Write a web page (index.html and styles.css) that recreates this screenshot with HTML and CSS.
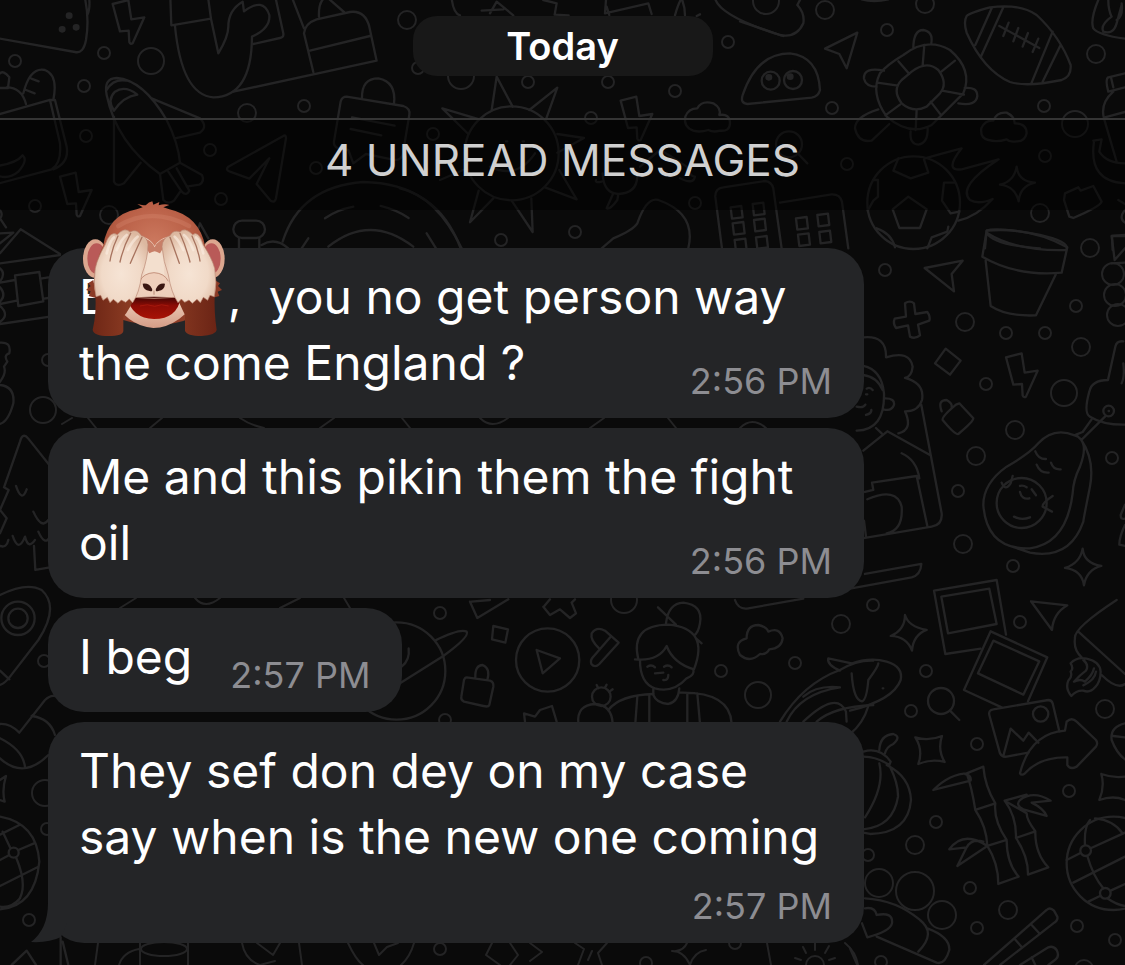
FILE: index.html
```
<!DOCTYPE html>
<html lang="en">
<head>
    <meta charset="UTF-8">
    <meta name="viewport" content="width=device-width, initial-scale=1">
    <title>Chat</title>
    <link rel="stylesheet" href="styles.css">
</head>
<body>
    <main class="chat">
        <!-- Doodle wallpaper -->
        <svg class="wallpaper" viewBox="0 0 1125 965" preserveAspectRatio="xMidYMin slice" aria-hidden="true">
            <defs>
                <path id="bolt" d="M0 12 L47 0 L56 58 L95 52 L60 130 Q53 134 50 126 L48 92 L22 94Z"/>
            </defs>

            <!-- Small bubbles -->
            <g class="doodle">
                <circle cx="15" cy="61" r="6"/><circle cx="104" cy="53" r="6"/><circle cx="84" cy="86" r="6"/>
                <circle cx="86" cy="136" r="6"/><circle cx="304" cy="106" r="6"/><circle cx="210" cy="150" r="6"/>
                <circle cx="316" cy="168" r="6"/><circle cx="221" cy="199" r="6"/><circle cx="35" cy="206" r="6"/>
                <circle cx="418" cy="68" r="6"/><circle cx="528" cy="82" r="6"/><circle cx="608" cy="82" r="6"/>
                <circle cx="675" cy="91" r="6"/><circle cx="591" cy="118" r="6"/><circle cx="433" cy="134" r="6"/>
                <circle cx="695" cy="203" r="6"/><circle cx="501" cy="240" r="6"/><circle cx="575" cy="232" r="6"/>
                <circle cx="728" cy="42" r="6"/><circle cx="887" cy="30" r="6"/><circle cx="832" cy="108" r="6"/>
                <circle cx="1044" cy="106" r="6"/><circle cx="847" cy="164" r="6"/><circle cx="1045" cy="156" r="6"/>
                <circle cx="885" cy="270" r="6"/><circle cx="1076" cy="306" r="6"/><circle cx="1006" cy="333" r="6"/>
                <circle cx="1045" cy="333" r="6"/><circle cx="986" cy="384" r="6"/><circle cx="1112" cy="458" r="6"/>
                <circle cx="958" cy="491" r="6"/><circle cx="1013" cy="566" r="6"/><circle cx="873" cy="605" r="6"/>
                <circle cx="1020" cy="622" r="6"/><circle cx="926" cy="671" r="6"/><circle cx="911" cy="711" r="6"/>
                <circle cx="977" cy="744" r="6"/><circle cx="1069" cy="791" r="6"/><circle cx="936" cy="822" r="6"/>
                <circle cx="868" cy="855" r="6"/><circle cx="970" cy="888" r="6"/><circle cx="977" cy="928" r="6"/>
                <circle cx="1077" cy="926" r="6"/><circle cx="1115" cy="940" r="6"/><circle cx="881" cy="962" r="6"/>
                <circle cx="440" cy="613" r="6"/><circle cx="721" cy="671" r="6"/><circle cx="795" cy="663" r="6"/>
                <circle cx="445" cy="720" r="6"/><circle cx="48" cy="360" r="6"/><circle cx="44" cy="661" r="6"/>
                <circle cx="47" cy="829" r="6"/><circle cx="29" cy="920" r="6"/><circle cx="440" cy="949" r="6"/>
                <circle cx="646" cy="963" r="6"/><circle cx="735" cy="943" r="6"/>
            </g>
            <!-- Medium and large bubbles -->
            <g class="doodle">
                <circle cx="247" cy="113" r="9"/><circle cx="109" cy="215" r="9"/><circle cx="407" cy="20" r="9"/>
                <circle cx="825" cy="10" r="9"/><circle cx="925" cy="4" r="9"/><circle cx="1096" cy="54" r="9"/>
                <circle cx="1040" cy="213" r="9"/><circle cx="1090" cy="248" r="9"/><circle cx="965" cy="322" r="9"/>
                <circle cx="1081" cy="347" r="9"/><circle cx="1015" cy="430" r="9"/><circle cx="976" cy="456" r="9"/>
                <circle cx="963" cy="544" r="9"/><circle cx="841" cy="624" r="9"/><circle cx="1105" cy="709" r="9"/>
                <circle cx="915" cy="845" r="9"/><circle cx="1008" cy="910" r="9"/><circle cx="1084" cy="969" r="9"/>
                <circle cx="151" cy="61" r="13"/><circle cx="461" cy="76" r="13"/><circle cx="766" cy="1" r="13"/>
                <circle cx="1075" cy="124" r="13"/><circle cx="1064" cy="393" r="13"/><circle cx="43" cy="410" r="13"/>
                <circle cx="758" cy="695" r="13"/><circle cx="624" cy="600" r="13"/><circle cx="45" cy="793" r="13"/>
                <circle cx="879" cy="883" r="14"/><circle cx="915" cy="891" r="19"/><circle cx="942" cy="915" r="14"/>
                <circle cx="1113" cy="274" r="11"/><circle cx="1115" cy="295" r="11"/><circle cx="1118" cy="315" r="11"/>
            </g>

            <!-- Top left: bag, plane, trousers, cake -->
            <g class="doodle zoomed" transform="scale(.3333)">
                <path class="dot" d="M207 47h1M186 88h1M228 82h1"/>
                <path d="M-10 114 L225 156 Q250 162 258 120 Q268 60 256 0M268 0 Q270 30 262 45"/>
                <use href="#bolt" x="338" y="0"/>
                <path d="M511 -10 L514 76 L633 56 L624 -10M633 56 L655 160 Q685 110 685 80 Q685 30 728 5 L732 34 Q790 -10 808 45 Q812 85 756 110 Q755 290 640 292 Q545 285 525 78"/>
                <path d="M826 -10 L850 100 Q852 112 840 114 L760 132M700 275 L1130 182 L1108 80 Q1095 30 1050 36 L950 58 Q915 70 912 100 L940 216M930 152 L1110 108M875 -10 L912 85M957 50 Q955 0 980 -10M985 -5 L1032 36"/>
                <path d="M-10 345 L150 300 L180 430 Q185 490 155 508 L-10 552M150 300 L165 300 L200 440 Q208 490 160 508M70 280 Q90 200 135 210 Q175 225 160 300M78 312 Q65 262 20 262M94 236 L116 244M78 270 L104 280M-10 264 L24 264 L28 232 Q10 210 0 220M-10 498 Q50 490 68 466 Q85 480 55 515 Q25 540 -10 526"/>
                <path d="M540 488 L480 522 Q350 430 320 285 Q310 235 350 234 Q430 240 500 360 Q535 430 540 488ZM320 270 Q340 235 380 242M342 332 Q320 300 345 275 Q375 255 412 284 Q370 290 342 332M455 295 L600 355 Q625 380 600 398 L525 415M342 350 L342 545 Q350 562 372 550 L422 488M480 522 L490 600 Q505 615 522 602 L540 576M540 488 L606 525 Q615 545 598 554 L560 560M505 515 L545 575 Q560 590 568 572 L530 505"/>
                <path d="M850 408 L685 500 Q675 510 690 515 L748 536 L808 475 L770 552 L812 602 Q825 610 828 595 L858 415 Q858 402 850 408Z"/>
                <use href="#bolt" x="180" y="518"/>
                <path d="M1040 290 L1210 318 Q1232 325 1228 345 L1208 465 Q1200 485 1175 478 L1098 462 L1060 490 L1045 450 L1015 445 Q1000 440 1002 425 L1022 305 Q1026 290 1040 290ZM1086 295 Q1085 235 1135 235 Q1190 245 1182 312M1056 352 L1184 377M1052 387 L1144 406"/>
                <path d="M848 725 Q900 560 1090 546 Q1310 550 1382 745M985 740 Q1110 640 1240 740M975 655 Q1010 630 1060 620M1142 618 Q1190 630 1226 654M905 745 L925 715"/>
                <rect x="700" y="662" width="95" height="52" rx="26"/>
                <path d="M717 714 V745M778 714 V745M785 735 Q825 710 865 745M590 700 L600 670 L625 715"/>
            </g>

            <!-- Top middle: sun, cloud, phones -->
            <g class="doodle zoomed" transform="translate(400 0) scale(.3333)">
                <circle cx="335" cy="460" r="141"/>
                <path d="M275 330 L290 230 L338 320M388 330 L472 263 L438 358M205 402 L127 325 L238 358M472 402 L552 414 L472 458M435 562 L530 598 L478 510M335 602 L398 696 L394 595M236 572 L210 667 L280 595M190 510 L120 540"/>
                <path d="M318 424h4M368 424h4M270 500 Q350 540 405 460"/>
                <path d="M155 -5 Q160 40 180 46M245 32 L310 28M270 40 L290 5 L340 46M430 0 L470 10 L464 44 L506 46M618 0 L615 40 L745 10 L755 42M825 46 Q835 10 845 -5 Q855 20 855 46M620 20 L628 45M890 48 L900 43M945 -5 Q960 50 1150 108"/>
                <use href="#bolt" x="662" y="290"/>
                <path d="M880 392 Q850 380 856 350 Q865 325 892 325 Q905 300 940 310 Q965 325 958 345 Q990 340 990 370 Q990 395 960 392 Q940 398 925 390 Q900 398 880 392Z"/>
                <path d="M608 520 Q610 580 655 582 Q710 580 712 530M640 580 L620 625 Q630 630 652 600 L655 582M720 500 L780 450 Q800 460 860 500 Q870 530 885 530 Q880 555 840 535M605 545 Q585 550 588 540"/>
                <path d="M605 745 L640 715 Q700 690 712 670 Q740 590 775 600 Q890 640 865 745M0 565 Q110 590 185 745M80 700 L108 745"/>
                <path d="M966 745 L946 590 Q945 565 970 562 L1095 543 Q1115 545 1120 565 L1145 745M1140 608 L1295 583 Q1320 582 1326 605 L1345 745"/>
                <path d="M992 622l32 -4 4 34 -32 4zM1058 612l32 -4 4 34 -32 4zM998 670l32 -4 4 34 -32 4zM1062 660l32 -4 4 34 -32 4zM1004 720l32 -4 4 34 -32 4zM1068 712l32 -4 4 34 -32 4zM1188 655l32 -4 4 34 -32 4zM1252 645l32 -4 4 34 -32 4zM1194 704l32 -4 4 34 -32 4zM1258 696l32 -4 4 34 -32 4z"/>
            </g>

            <!-- Top right: turtle, football, soccer ball -->
            <g class="doodle zoomed" transform="translate(740 0) scale(.3333)">
                <path d="M0 64 L120 105 Q170 115 190 70 Q195 40 172 15 L180 0M365 -2 Q400 8 445 -2"/>
                <path d="M22 312 Q0 310 8 285 Q50 160 150 160 Q235 170 240 270 Q235 290 215 293Z"/>
                <circle cx="92" cy="242" r="27"/><circle cx="159" cy="240" r="27"/>
                <path class="dot" d="M86 232h1M150 230h1"/>
                <path d="M352 98 L255 146 L298 162 L320 205 Z"/>
                <path d="M490 165 Q560 110 630 150 Q700 210 670 280 L575 375 Q510 410 440 350 Q390 280 420 220 Q440 195 490 165ZM515 215 Q560 180 595 210 Q625 250 600 280 L560 320 Q520 340 485 310 Q455 270 485 240ZM553 135 L548 196M645 182 L604 215M672 284 L606 272M602 344 L572 305M527 390 L530 330M436 346 L480 314M412 248 L474 257M475 184 L508 222M520 146 Q520 90 550 90 Q580 95 574 130M432 212 Q370 200 372 236 Q378 260 410 260M674 264 Q712 260 712 288 Q708 320 655 310M415 328 Q345 350 345 385 Q355 430 395 422 L448 372M512 394 Q508 432 535 434 Q565 430 563 382"/>
                <path d="M680 48 Q690 38 750 22 Q840 10 890 45 Q960 110 992 195 Q995 230 965 240 Q860 262 810 246 Q730 210 680 98 Q670 65 680 48ZM755 25 L706 135M790 22 L722 172M938 95 L875 248M962 135 L908 245M778 78 L898 144M806 68 L790 108M835 84 L820 124M864 99 L848 140M895 116 L878 156"/>
                <path d="M1075 0 Q1050 60 1060 85 Q1075 105 1155 116M1105 0 Q1105 30 1115 50 Q1080 75 1090 95 Q1120 105 1130 70 L1145 15M1130 60 Q1150 50 1145 10"/>
                <path d="M1155 220 L1105 232 Q1095 238 1105 275 L1155 262M1113 232 L1120 262M1120 275 Q1080 310 1092 355 L1130 485M1092 353 L1155 336M1060 422 L1085 418 L1078 455 Q1100 490 1155 490M1062 425 Q1045 545 1155 550"/>
                <path d="M745 420 Q720 415 724 385 Q735 360 760 362 Q770 335 800 338 Q825 350 824 370 Q860 370 860 400 Q855 425 830 424 Q810 428 800 418 Q770 428 745 420Z"/>
                <circle cx="147" cy="433" r="39"/><path d="M175 462 L202 490"/>
                <circle cx="521" cy="608" r="139"/>
                <path d="M505 590 L560 628 L540 684 L478 684 L458 628ZM475 475 L460 512 L512 535 L565 518 L552 478M383 632 L400 602 L414 590 L414 540 L400 540M642 548 L612 548 L606 602 L632 640 L658 635M410 685 Q455 700 465 742M562 745 L575 712 L622 695 L625 680"/>
                <path d="M555 475 Q600 462 665 445 Q610 515 665 508 L776 478 Q650 560 690 600 Q715 615 758 597 Q710 650 655 662"/>
                <path d="M830 500 Q835 545 885 548 Q840 558 836 604 Q825 558 780 554 Q822 545 830 500Z"/>
                <path d="M975 580 L1015 562 L1022 572 L1060 558 L1085 605 Q1080 620 1000 654 L988 650 L972 600Z"/>
                <path d="M735 745 L740 692 Q770 680 900 705 Q985 725 980 745M740 698 Q760 735 900 745M1118 750 L1116 708 H1155M1155 612 L1135 600M1155 668 Q1135 655 1155 630"/>
            </g>

            <!-- Right: flower pot, person, avocado -->
            <g class="doodle zoomed" transform="translate(850 200) scale(.3333)">
                <path d="M410 92 Q540 80 652 142 L635 218 Q500 230 397 170ZM410 98 Q500 155 650 150M407 182 L422 318 Q470 350 558 346 L618 222"/>
                <path d="M338 182 L224 204 L312 274 L305 222 Z"/>
                <path d="M165 310 Q180 300 192 310 L196 342 L232 336 Q242 350 238 362 L204 374 L210 406 Q195 418 180 410 L174 376 L138 384 Q128 370 134 356 L168 350Z"/>
                <path d="M287 446 L332 482 L300 524 L255 490ZM328 610 L370 655 Q370 665 325 702 Q315 705 278 660 Q275 650 318 614ZM275 634 Q262 600 290 600 Q308 610 305 622"/>
                <use href="#bolt" x="468" y="460"/>
                <path d="M40 412 Q110 405 108 472 Q180 450 188 500 Q185 530 165 534 Q225 550 216 600 Q205 635 165 634 Q190 690 145 700M40 498 Q95 510 102 580 Q105 690 20 692M40 525 Q80 530 98 570M106 595 Q135 595 132 615 Q125 635 100 628M20 620 Q40 625 46 614M48 645 Q65 640 64 630M50 566 Q60 560 68 570M48 583h4M78 684 L95 700M40 752 L112 694 L240 765M214 615 L275 940 Q278 975 245 980 L45 1014M155 760 Q200 780 208 835M45 876 L70 870 L66 848 L200 828 L232 978M52 898 Q140 860 155 920 Q160 990 110 1000M45 1122 L214 1092 Q212 1125 185 1132 L0 1166M42 962 L48 1010"/>
                <path d="M820 424 Q800 422 796 440 L774 540 Q725 540 718 575 Q700 640 720 650 Q760 675 825 674M815 550 Q825 530 820 490"/>
                <circle cx="776" cy="633" r="16"/>
                <path d="M776 633h1"/>
                <path d="M725 658 L698 696 L678 704 L694 720 L708 706 L765 650M674 706 Q610 680 565 730 Q540 760 470 800 Q400 850 400 915 Q410 1050 540 1045 Q650 1030 668 880 Q670 840 690 800 Q720 720 674 706M694 720 Q735 780 720 860 Q700 960 700 965 Q660 1080 540 1058 L475 1036"/>
                <circle cx="515" cy="909" r="75"/>
                <path d="M556 754 Q565 778 588 777M603 788 Q610 810 632 808M560 794 Q570 820 596 818M455 848 Q465 875 482 850 L488 828M510 876 Q515 900 538 895M510 858 Q520 855 530 862M545 868 L558 886M492 950 Q515 962 540 952M608 888 Q575 910 578 920 L606 935"/>
                <path d="M698 1046 Q702 1090 754 1098 Q710 1110 702 1156 Q695 1110 645 1104 Q690 1090 698 1046ZM165 1245 Q175 1280 230 1290 Q190 1305 186 1352 Q170 1310 122 1308 Q165 1290 165 1245Z"/>
                <path d="M543 1204 L652 1216 Q610 1240 606 1290Z"/>
                <path d="M825 105 L785 108 L794 180 L825 145M785 190 L825 188M825 914 L812 945 Q812 960 825 956M825 975 Q808 1010 808 1034 L825 1038"/>
            </g>

            <!-- Bottom right: photos, bamboo, basketball -->
            <g class="doodle zoomed" transform="translate(850 600) scale(.3333)">
                <path d="M468 104 L440 -60 L252 -28 L286 162 L392 146M274 -10 L294 100 L440 72 L418 -34 L274 -10"/>
                <path d="M422 94 L592 172 L534 304M422 94 L342 270 L455 322M430 122 L568 184 L520 284 L384 220Z"/>
                <path d="M418 345 Q415 330 430 328 L595 300 Q605 300 608 310 L628 394M418 345 L450 460 Q455 472 470 470 L535 458M460 468 L482 386 L520 422 L536 398 L565 428"/>
                <circle cx="572" cy="342" r="23"/>
                <path d="M510 520 Q540 400 645 392 L650 365 Q665 350 680 365 L738 420 Q745 430 738 440 L680 500 Q660 510 652 495 L652 472 Q570 470 525 520 Q515 528 510 520Z"/>
                <path d="M800 0 Q670 85 675 115 Q670 150 695 172M755 225 Q800 270 825 252M685 95 L825 222M662 190 Q680 170 710 176 Q750 185 752 215 Q752 245 735 262 Q720 280 700 272 Q680 270 664 288 Q645 265 655 242 Q668 230 662 215 Q672 205 662 190ZM700 180 Q718 195 708 212 Q690 225 672 245 Q690 235 705 245 Q728 225 732 205M738 215 Q735 240 700 256"/>
                <circle cx="273" cy="303" r="39"/><path d="M300 332 L328 360"/>
                <path d="M0 192 Q60 170 110 185 Q160 200 152 240 Q130 300 0 332M85 190 Q85 200 55 240 Q50 300 36 304 Q10 300 5 220M55 318 Q40 370 0 402M98 265h2"/>
                <path d="M196 412 Q235 425 276 408 Q262 450 284 486 Q245 475 205 492 Q220 450 196 412ZM754 522 Q790 535 825 530M754 522 Q765 560 748 600 Q790 585 825 600"/>
                <path d="M40 455 Q90 440 122 485 L118 495 Q80 470 40 470M88 450 Q90 405 130 402 Q155 410 130 432 Q110 440 105 460M110 495 Q180 530 183 600 Q175 700 60 702 L40 698M120 500 Q145 550 144 590 Q130 680 40 688M88 490 Q105 560 45 652"/>
                <path d="M400 500 L350 520 Q365 560 376 630 L436 610 Q405 560 400 500ZM376 630 Q410 680 412 738 L470 720 Q430 660 436 610M412 738 Q445 790 445 852 L506 830 Q470 790 470 720M355 520 Q300 520 250 570 L362 542 Q365 525 345 522M412 738 Q340 690 298 748 L350 742 L322 798 L412 738M350 742 Q365 715 400 725"/>
                <path d="M464 602 L530 584 M530 640 Q530 660 556 694 L498 714 Q500 650 464 602ZM498 714 Q535 770 534 824 L595 802 Q555 760 556 694M510 600 Q550 570 602 602 L545 608 Q580 625 590 648 L520 628 Q495 615 510 600Z"/>
                <circle cx="790" cy="790" r="140"/><circle cx="707" cy="752" r="16"/><circle cx="766" cy="880" r="16"/>
                <path d="M650 780 L690 760M722 745 L825 698M670 848 L825 770M715 905 L750 888M782 872 L825 852M705 735 Q702 680 720 660M712 768 Q730 830 760 865M735 655 Q790 660 818 700M772 895 Q800 915 825 918M825 370 Q780 380 785 420 Q800 460 825 478M790 408 L825 412"/>
                <path d="M45 925 Q75 920 80 945 Q130 935 126 970 Q120 995 52 1012 L36 970M45 895 Q140 900 210 960 Q260 1000 205 1055M80 1010 L260 1088 Q285 1095 298 1050 Q300 1010 232 985M0 1045 L22 1095"/>
                <path d="M402 1095 L590 930 Q600 920 612 932 L622 950 Q625 962 610 970 L450 1095M495 1018 L516 1042M545 975 L570 1002M510 1095 L595 1042 Q610 1036 620 1050 Q630 1070 615 1080 L595 1095M545 1072 L556 1095"/>
            </g>

            <!-- Middle strip: planet, play button, cook -->
            <g class="doodle zoomed" transform="translate(390 590) scale(.3333)">
                <circle cx="20" cy="243" r="146"/>
                <path d="M135 152 Q210 115 230 125 Q240 140 160 198 L30 280M56 175 Q60 210 35 230M310 108 L354 118 L346 158 L306 148ZM230 262 L300 272 Q312 276 310 290 L298 345 Q295 352 280 348 L222 335 Q212 330 214 320 L222 270 Q225 262 230 262ZM256 262 Q255 225 278 225 Q302 235 292 270"/>
                <circle cx="473" cy="210" r="95"/>
                <path d="M440 180 L510 205 L458 250Z"/>
                <path d="M240 35 L262 84 L355 28M245 35 L300 30M460 50 L480 75 L510 58 L540 84 L558 70 L545 38 L555 28M463 48 L480 28"/>
                <path d="M686 158 L645 122 Q620 108 605 130 Q600 150 628 176 M686 158 L628 222 Q615 235 604 222 Q600 210 610 200 L662 140"/>
                <circle cx="634" cy="320" r="28"/><path d="M565 400 Q560 345 615 342 Q665 345 668 400M625 295 L620 285M645 293 L650 284M658 305 L668 298M405 395 L402 370 L435 380 L450 360 L486 348 L500 395"/>
                <path d="M828 100 Q835 40 880 38 Q940 45 930 100 Q925 130 912 136M804 52 L858 104M918 145 L935 160M745 208 Q720 105 835 104 Q960 115 912 238 Q850 220 830 168 Q805 215 735 208M750 210 Q750 280 795 295 Q850 310 890 265 Q915 255 910 238M790 295 V315 Q800 340 835 342 Q865 335 868 295M772 230 Q785 222 795 232M822 230 Q835 222 845 232M795 250 L820 248M820 270 Q835 272 835 255"/>
                <path d="M655 360 Q690 315 790 312M870 308 Q1020 305 1025 400M742 320 L736 400M778 315 V400M892 312 V400M922 310 L930 400"/>
                <path d="M1050 195 Q1030 155 1070 145 Q1070 105 1105 105 Q1130 110 1135 125 Q1170 110 1178 145 Q1175 175 1138 178 Q1130 195 1110 192 Q1080 220 1050 195ZM1035 30 Q1045 60 1075 55 L1240 26"/>
                <path d="M1170 395 Q1240 280 1350 240 Q1400 210 1450 212M1350 242 Q1310 225 1315 205 L1385 220M1190 395 Q1230 310 1350 292 Q1280 285 1240 320M1240 395 Q1340 300 1368 365 L1370 395M1280 395 Q1330 350 1450 345"/>
            </g>

            <!-- Left edge: house, tree, rocket, ball -->
            <g class="doodle zoomed" transform="translate(0 200) scale(.3333)">
                <path d="M0 30 Q10 45 0 55 L18 82M0 100 L40 98 L0 130M0 160 L62 88 L180 162M0 190 L180 165M45 226 L118 216 L130 304 L55 318ZM0 248 L45 240M0 312 L50 302M122 236 L145 232M132 296 L145 294M0 372 L150 350M0 205 Q18 220 0 245M0 262 Q20 285 0 305M0 318 Q30 345 0 365"/>
                <path d="M0 428 Q35 425 28 460 Q10 465 22 485 L12 500 Q20 520 0 545M0 555 Q45 560 40 610 Q25 665 0 672M160 810 L85 716 Q68 695 60 725 L12 862 L26 870 L0 930 L20 955 L0 1000M48 858 Q65 910 80 868M100 935 Q125 990 145 960M0 1038 Q20 1045 25 1020 M38 1008 Q55 1060 75 1010 Q85 1050 105 1020 M115 995 Q135 1040 150 1010M102 1038 L106 1110 L150 1102"/>
            </g>
            <g class="doodle zoomed" transform="translate(0 560) scale(.3333)">
                <circle cx="54" cy="175" r="50"/><circle cx="54" cy="175" r="29"/>
                <path d="M0 105 Q80 65 125 90 Q180 140 115 240 L30 350 Q15 370 0 375M0 332 L28 358M0 492 Q30 490 58 518 L135 420 Q150 405 165 408M95 468 Q150 475 165 525M0 535 Q70 570 75 622M0 595 Q70 660 145 585M0 660 L18 648 Q5 690 14 725 L0 720"/>
                <path d="M0 770 Q110 790 118 905 Q105 1040 0 1048M0 824 L58 795M0 900 L28 885M55 870 L102 850M0 978 L112 922M8 815 L30 862M48 892 Q85 980 55 1022M0 1040 Q35 1045 60 1015"/>
                <circle cx="41" cy="878" r="15"/>
                <path d="M35 1215 L80 1172 L108 1215M182 1132 V1215M188 1145 L205 1215"/>
            </g>

            <!-- Bottom edge -->
            <g class="doodle">
                <path d="M98 943 L95 965M119 965 Q123 952 139 949M140 943 V965M188 943 V965"/>
                <ellipse cx="164" cy="949" rx="23" ry="7"/>
                <path d="M242 943 Q245 960 260 965 L275 961M257 943 L273 955 L280 943M299 943 L302 965M348 943 Q356 960 363 965M414 943 Q410 957 401 965M374 943 L379 955 L387 947 L398 943M492 943 L486 955 L500 965M510 943 L518 955 L510 965M530 943 L542 952 L530 961M575 943 L584 949 L578 965M607 943 L598 953 L602 965M592 951 L588 960M672 951 Q684 951 690 965 Q694 952 706 950M687 943 Q684 950 676 951M767 943 L771 965M845 943 Q856 952 858 965"/>
                <circle cx="815" cy="965" r="9"/>
                <path d="M815 943 V950M803 947 L806 953M829 946 L825 953M795 958 L801 960M835 958 L829 960"/>
            </g>
            <!-- Lines showing between bubbles -->
            <g class="doodle">
                <path d="M62 424 L72 418M88 418 L96 428M150 428 L162 418M240 418 Q250 425 264 428M320 428 L334 418M402 418 L410 428M480 418 Q492 430 508 418M590 428 L604 418M668 418 L676 428M740 428 Q752 416 766 428M120 608 L136 598M195 598 Q205 610 220 598M280 608 L300 598M344 598 L350 608"/>
            </g>
        </svg>

        <header class="day">
            <span class="day-pill">Today</span>
        </header>

        <h1 class="unread">4 UNREAD MESSAGES</h1>

        <section class="messages">
            <article class="bubble">
                <p>E<span class="cover"><svg class="monkey" viewBox="0 0 570 480" aria-hidden="true">
                    <defs>
                        <radialGradient id="head" cx=".5" cy=".35" r=".6">
                            <stop offset="0" stop-color="#cd7a60"/>
                            <stop offset=".55" stop-color="#b95f46"/>
                            <stop offset="1" stop-color="#8e3d27"/>
                        </radialGradient>
                        <linearGradient id="arm" x1="0" x2="1">
                            <stop offset="0" stop-color="#6f2716"/>
                            <stop offset=".45" stop-color="#984529"/>
                            <stop offset="1" stop-color="#6b2415"/>
                        </linearGradient>
                        <radialGradient id="hand" cx=".5" cy=".6" r=".6">
                            <stop offset="0" stop-color="#f6e4d5"/>
                            <stop offset=".6" stop-color="#f1dac8"/>
                            <stop offset="1" stop-color="#dcb8a0"/>
                        </radialGradient>
                        <linearGradient id="muzzle" x1="0" y1="0" x2="0" y2="1">
                            <stop offset="0" stop-color="#f3dfce"/>
                            <stop offset=".7" stop-color="#eccdb9"/>
                            <stop offset="1" stop-color="#d49c86"/>
                        </linearGradient>
                        <linearGradient id="mouth" x1="0" y1="0" x2="0" y2="1">
                            <stop offset="0" stop-color="#3d0504"/>
                            <stop offset=".4" stop-color="#8c0c05"/>
                            <stop offset="1" stop-color="#a81206"/>
                        </linearGradient>
                    </defs>
                    <ellipse cx="106" cy="206" rx="37" ry="58" fill="#dca78f"/>
                    <ellipse cx="110" cy="206" rx="28" ry="46" fill="#b95a58"/>
                    <ellipse cx="458" cy="206" rx="36" ry="58" fill="#dca78f"/>
                    <ellipse cx="454" cy="206" rx="28" ry="46" fill="#b95a58"/>
                    <path fill="#8c3b26" d="M100 270 L84 280 L92 288 L78 300 L92 304 L86 318 L110 325ZM464 270 L480 280 L474 288 L486 300 L473 305 L478 318 L454 325Z"/>
                    <path fill="url(#head)" d="M230 58 L248 52 L232 42 Q256 48 258 45 Q266 36 277 34 L280 44 L298 36 L296 46 Q315 40 328 45 L310 52 L328 58 Q418 78 436 170 Q474 250 462 315 Q420 405 280 405 Q140 400 104 315 Q94 240 130 165 Q144 75 230 58Z"/>
                    <path fill="none" stroke="#de947a" stroke-opacity=".25" stroke-width="14" stroke-linecap="round" d="M175 108 Q275 48 387 108"/>
                    <path fill="url(#muzzle)" d="M145 170 Q190 130 250 140 Q275 150 284 168 Q296 146 325 140 Q375 132 420 170 L425 310 Q360 414 280 414 Q200 410 145 310Z"/>
                    <path fill="#c87f68" d="M240 140 Q275 148 284 172 Q294 146 330 140 L300 190 Q284 200 268 190Z"/>
                    <path fill="#f3dfce" d="M258 205 Q262 188 284 184 Q304 188 310 205 L314 270 H252Z"/>
                    <path fill="url(#mouth)" d="M202 323 Q282 317 362 323 Q352 386 282 387 Q216 384 202 323Z"/>
                    <path fill="none" stroke="#b98673" stroke-width="3" d="M198 321 Q282 329 366 321"/>
                    <path fill="none" stroke="#c02413" stroke-opacity=".5" stroke-width="3" d="M240 348 Q262 340 284 349 Q305 340 326 348"/>
                    <ellipse cx="282" cy="281" rx="43" ry="34" fill="#efcfbb"/>
                    <path fill="none" stroke="#c69580" stroke-width="3" d="M239 274 Q250 250 282 248 Q314 250 325 274"/>
                    <path fill="#3a1611" d="M248 281 Q268 278 276 296 Q279 306 269 303 Q249 300 248 281ZM315 281 Q296 278 288 296 Q285 306 295 303 Q314 300 315 281Z"/>
                    <path fill="none" stroke="#9a6453" stroke-width="2" d="M282 302 V314"/>
                    <path fill="url(#arm)" d="M106 310 H228 Q210 360 190 380 L190 422 Q190 438 145 438 Q102 438 98 420 Q110 370 106 310ZM464 310 H346 Q362 350 375 375 L375 422 Q380 438 425 438 Q468 435 470 420 Q462 370 464 310Z"/>
                    <path fill="url(#hand)" stroke="#b98772" stroke-width="2" d="M108 320 Q98 280 106 235 Q112 205 135 165 Q150 120 172 134 Q194 110 210 126 Q230 114 244 137 Q262 140 264 164 Q264 205 245 255 Q238 310 218 338 L208 327 L197 337 L184 330 L174 340 L160 328 L150 338 L142 322 L129 331 L122 316Z"/>
                    <path fill="url(#hand)" stroke="#b98772" stroke-width="2" d="M463 320 Q472 280 464 235 Q456 205 430 165 Q416 120 398 134 Q374 110 360 126 Q340 118 330 137 Q308 142 306 170 Q310 215 325 255 Q334 310 354 338 L364 327 L374 337 L387 330 L397 340 L411 328 L421 338 L430 322 L443 331 L450 316Z"/>
                    <path fill="none" stroke="#a8745f" stroke-width="4" stroke-linecap="round" d="M150 213 Q156 175 174 138M180 216 Q190 170 212 130M211 220 Q228 180 246 142M420 213 Q414 175 396 138M390 216 Q378 170 360 130M358 220 Q344 180 330 142"/>
                    <path fill="none" stroke="#fbeee2" stroke-opacity=".6" stroke-width="8" stroke-linecap="round" d="M140 190 Q150 150 162 142M170 180 Q185 145 200 135M203 180 Q220 150 233 140M430 190 Q420 150 408 142M400 180 Q386 145 372 135M370 180 Q356 150 344 140"/>
                </svg></span>, &nbsp;you no get person way the come England ? <time>2:56 PM</time></p>
            </article>

            <article class="bubble">
                <p>Me and this pikin them the fight oil <time>2:56 PM</time></p>
            </article>

            <article class="bubble short">
                <p>I beg <time>2:57 PM</time></p>
            </article>

            <article class="bubble long">
                <p>They sef don dey on my case say when is the new one coming <time>2:57 PM</time></p>
                <svg class="tail" viewBox="0 0 36 40" aria-hidden="true">
                    <path d="M17 0 Q17 26 0 39 Q18 40 30 34 L36 20 V0Z"/>
                </svg>
            </article>
        </section>
    </main>
</body>
</html>
```
FILE: styles.css
```
* {
    box-sizing: border-box;
}
body {
    margin: 0;
    background-color: #0a0a0a;
    color: #fff;
    font-family: Inter, "Liberation Sans", sans-serif;
}
.chat {
    position: relative;
    min-height: 100vh;
    overflow: hidden;
}

/* Wallpaper */
.wallpaper {
    position: absolute;
    top: 0;
    left: 0;
    width: 100%;
    height: 100%;
}
.doodle {
    fill: none;
    stroke: #242425;
    stroke-width: 2;
    stroke-linecap: round;
    stroke-linejoin: round;
}
.doodle.zoomed {
    stroke-width: 7;
}
.doodle .dot {
    stroke-width: 20;
}

/* Date and unread bar */
.day {
    position: relative;
    display: flex;
    justify-content: center;
    padding: 16px 0 42px;
}
.day-pill {
    width: 300px;
    border-radius: 24px;
    background-color: #181818;
    font-size: 38px;
    font-weight: 600;
    line-height: 60px;
    text-align: center;
}
.unread {
    position: relative;
    margin: 0;
    padding: 2px 0 12px;
    border-top: 2px solid #353535;
    background-color: rgba(0, 0, 0, 0.5);
    color: #d0d0d0;
    font-size: 44px;
    font-weight: 400;
    line-height: 76px;
    text-align: center;
}

/* Messages */
.messages {
    position: relative;
    display: flex;
    flex-direction: column;
    align-items: flex-start;
    gap: 10px;
    padding: 38px 48px 22px;
}
.bubble {
    position: relative;
    width: 100%;
    max-width: 816px;
    padding: 16px 32px 16px 31px;
    border-radius: 36px;
    background-color: #242527;
}
.bubble p {
    display: flow-root;
    margin: 0;
    font-size: 48px;
    line-height: 66px;
}
/* The time sits at the end of the last line, or below it when there is no room */
.bubble time {
    float: right;
    margin-top: 30px;
    color: #8d8d92;
    font-size: 36px;
    line-height: 42px;
}
.bubble.short {
    width: auto;
}
.bubble.short time {
    margin-left: 38px;
}
.bubble.long time {
    margin-top: 15px;
}

/* Emoji laid over the name */
.cover {
    position: relative;
    display: inline-block;
    width: 120px;
}
.monkey {
    position: absolute;
    left: -48px;
    bottom: -36px;
    width: 190px;
    height: 160px;
}
.tail {
    position: absolute;
    left: -17px;
    bottom: 0;
    width: 36px;
    height: 40px;
    fill: #242527;
}
```
